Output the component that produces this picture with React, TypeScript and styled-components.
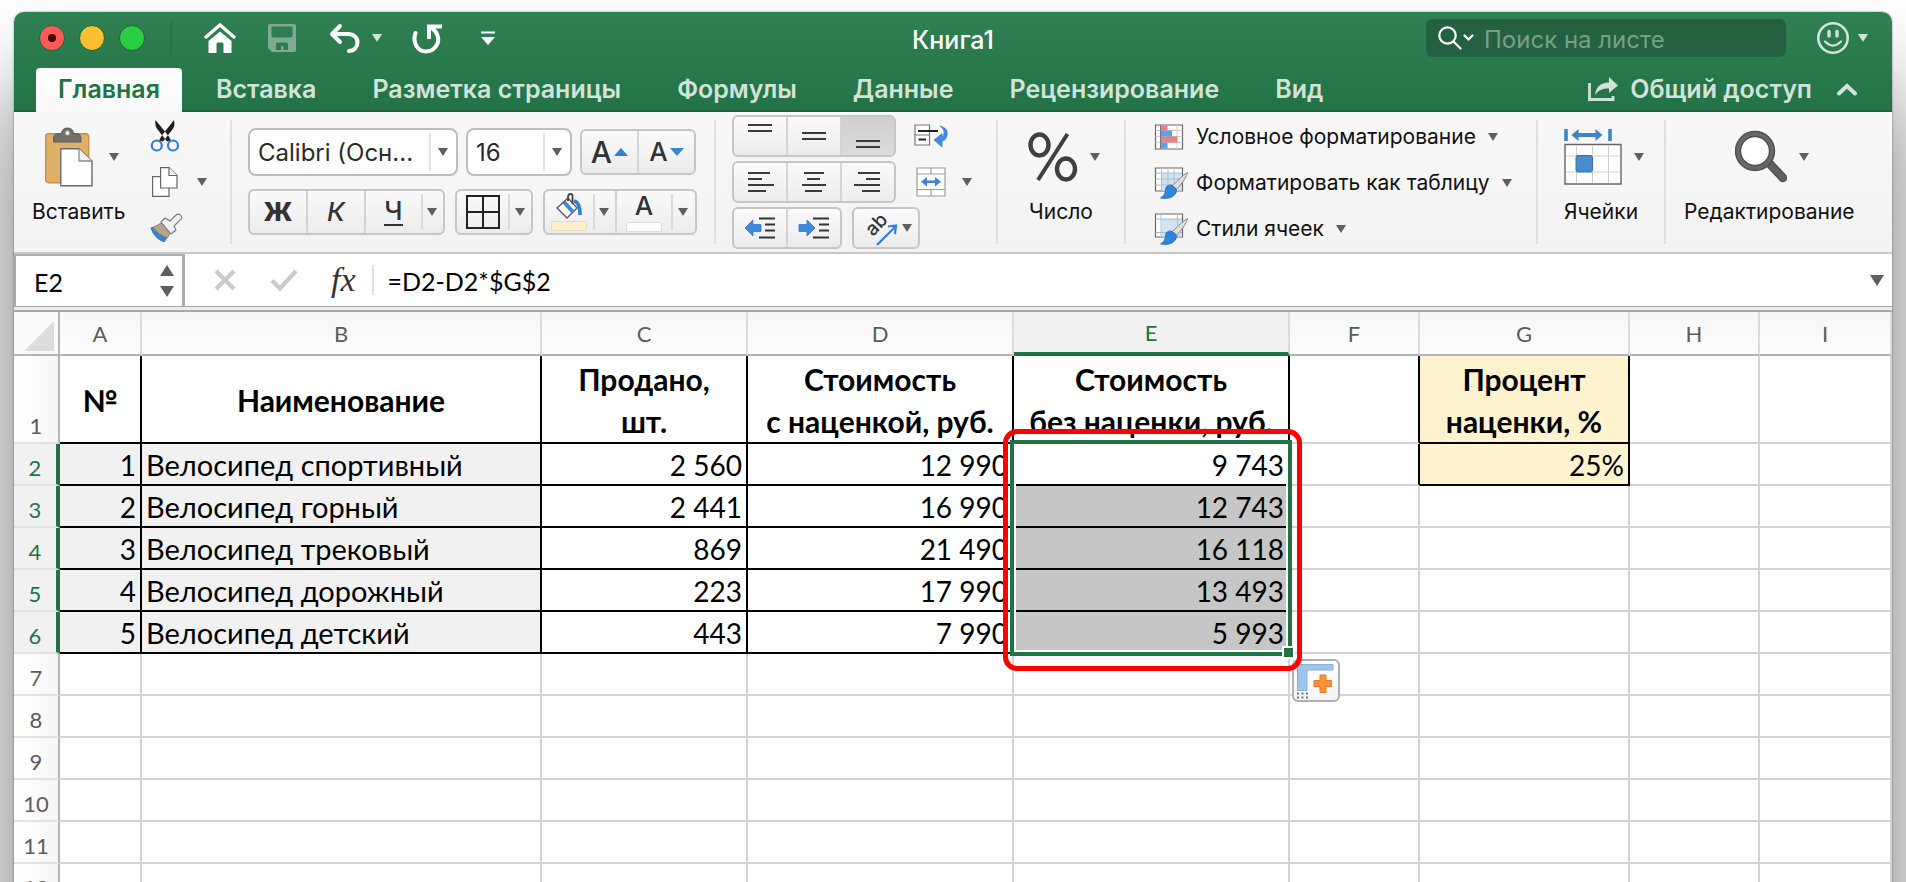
import React from 'react';
import styled, { createGlobalStyle, css } from 'styled-components';

const UI = '"Inter", "Liberation Sans", sans-serif';
const SHEET = '"Lato", "Open Sans", "Noto Sans", sans-serif';
const GREEN = '#217346';

const GlobalStyle = createGlobalStyle`
  *, *::before, *::after { box-sizing: border-box; }
  body { margin: 0; background: #fff; font-family: ${UI}; }
  button, input, select { font: inherit; color: inherit; margin: 0; }
`;

/* ---------- window ---------- */

const Desktop = styled.div`
  height: 100vh;
  overflow: hidden;
  padding: 12px 14px 0;
  background: #fff;
`;

const Window = styled.main`
  border-radius: 10px 10px 0 0;
  background: #fff;
  box-shadow: 0 0 2px rgba(0, 0, 0, 0.5), 0 75px 100px rgba(0, 0, 0, 0.55);
`;

const Header = styled.header`
  border-radius: 10px 10px 0 0;
  border-bottom: 2px solid #1e5f39;
  background: linear-gradient(#308054, #227345);
  color: #d3e3d9;
`;

const TitleBar = styled.div`
  display: grid;
  grid-template-columns: 1fr auto 1fr;
  align-items: center;
  height: 52px;
`;

const TitleLeft = styled.div`
  display: flex;
  align-items: center;
  padding-left: 25px;
`;

const Lights = styled.div`
  display: flex;
  gap: 14px;
`;

const Light = styled.button<{ $color: string; $dot?: boolean }>`
  display: grid;
  place-items: center;
  width: 26px;
  height: 26px;
  padding: 0;
  border: 1px solid #22603c;
  border-radius: 50%;
  background: ${(p) => p.$color};
  &::after {
    content: '';
    width: 8px;
    height: 8px;
    border-radius: 50%;
    background: ${(p) => (p.$dot ? '#4d0000' : 'transparent')};
  }
`;

const TitleRule = styled.span`
  width: 2px;
  height: 32px;
  margin: 0 32px 0 25px;
  background: #2a6d48;
`;

const QuickTools = styled.div`
  display: flex;
  align-items: center;
  gap: 30px;
`;

const PlainButton = styled.button<{ $gap?: number }>`
  display: flex;
  align-items: center;
  justify-content: center;
  gap: ${(p) => p.$gap ?? 12}px;
  padding: 0;
  border: 0;
  background: none;
  svg { display: block; flex: none; }
`;

const DocTitle = styled.h1`
  margin: 0;
  padding-top: 3px;
  font-size: 25px;
  font-weight: 500;
  line-height: 30px;
  color: #fff;
`;

const TitleRight = styled.div`
  display: flex;
  align-items: center;
  justify-content: flex-end;
  gap: 30px;
  padding-right: 24px;
`;

const Search = styled.label`
  display: flex;
  align-items: center;
  gap: 10px;
  width: 360px;
  height: 38px;
  padding: 0 12px;
  border-radius: 6px;
  background: #246140;
  svg { flex: none; }
`;

const SearchInput = styled.input`
  flex: 1;
  min-width: 0;
  padding: 2px 0 0;
  border: 0;
  outline: 0;
  background: none;
  font-size: 24px;
  color: #fff;
  &::placeholder { color: #76a087; opacity: 1; }
`;

const TabRow = styled.div`
  display: flex;
  justify-content: space-between;
  margin-top: 4px;
  padding: 0 34px 0 22px;
`;

const Tabs = styled.nav`
  display: flex;
  gap: 12px;
`;

const Tab = styled.button<{ $active?: boolean }>`
  height: 44px;
  margin-bottom: -2px;
  padding: 0 22px 2px;
  border: 0;
  border-radius: 4px 4px 0 0;
  background: ${(p) => (p.$active ? 'linear-gradient(#fff, #f8f8f8)' : 'none')};
  color: ${(p) => (p.$active ? GREEN : '#d3e3d9')};
  font-size: 25px;
  font-weight: 600;
  line-height: 30px;
  white-space: nowrap;
`;

const ShareArea = styled.div`
  display: flex;
  align-items: center;
  gap: 24px;
  font-size: 25px;
  font-weight: 600;
`;

/* ---------- ribbon ---------- */

const Ribbon = styled.section`
  display: flex;
  height: 142px;
  border-bottom: 2px solid #c8c8c8;
  background: linear-gradient(#f8f8f8, #f3f3f3);
  color: #111;
`;

const Group = styled.div<{ $width?: number; $pad?: number }>`
  display: flex;
  flex: ${(p) => (p.$width ? `0 0 ${p.$width}px` : '1 0 auto')};
  padding-left: ${(p) => p.$pad ?? 0}px;
`;

const Rule = styled.span`
  flex: none;
  width: 2px;
  margin: 8px 0;
  background: #e0e0e0;
`;

const Centered = styled(Group)`
  justify-content: center;
`;

const Stack = styled.div<{ $gap: number }>`
  display: flex;
  flex-direction: column;
  justify-content: center;
  gap: ${(p) => p.$gap}px;
`;

const Row = styled.div<{ $gap: number; $height?: number }>`
  display: flex;
  align-items: center;
  gap: ${(p) => p.$gap}px;
  height: ${(p) => p.$height ?? 46}px;
`;

const BigButton = styled.button`
  display: flex;
  flex-direction: column;
  align-items: center;
  align-self: flex-start;
  gap: 12px;
  padding: 15px 0 0;
  border: 0;
  background: none;
  font-size: 21px;
  line-height: 26px;
  white-space: nowrap;
`;

const BigIcon = styled.span<{ $gap?: number }>`
  display: flex;
  align-items: center;
  gap: ${(p) => p.$gap ?? 12}px;
  height: 60px;
  padding-left: 6px;
`;

const Segments = styled.div`
  display: flex;
  height: 100%;
  border: 2px solid #c6c6c6;
  border-radius: 6px;
  background: linear-gradient(#fafafa, #ececec);
`;

const Segment = styled.button<{ $width: number; $line?: boolean; $pressed?: boolean }>`
  display: flex;
  align-items: center;
  justify-content: center;
  gap: 2px;
  width: ${(p) => p.$width}px;
  padding: 0;
  border: 0;
  border-right: ${(p) => (p.$line ? '2px solid #d4d4d4' : '0')};
  background: ${(p) => (p.$pressed ? 'linear-gradient(#cfcfcf, #dcdcdc)' : 'none')};
  color: #333;
  svg { display: block; flex: none; }
  &:last-child { border-radius: 0 4px 4px 0; }
`;

const DropSegment = styled(Segment)`
  position: relative;
  &::before {
    content: '';
    position: absolute;
    left: 0;
    top: 3px;
    bottom: 3px;
    width: 2px;
    background: #dadada;
  }
`;

const Glyph = styled.span<{ $size?: number; $bold?: boolean; $italic?: boolean; $underline?: boolean }>`
  font-size: ${(p) => p.$size ?? 26}px;
  line-height: 28px;
  font-weight: ${(p) => (p.$bold ? 800 : 500)};
  font-style: ${(p) => (p.$italic ? 'italic' : 'normal')};
  ${(p) => p.$underline && css`border-bottom: 2px solid #333; line-height: 26px;`}
`;

const Swatched = styled.span<{ $color: string }>`
  display: flex;
  flex-direction: column;
  align-items: center;
  gap: 2px;
  &::after {
    content: '';
    width: 36px;
    height: 10px;
    border: 1px solid #e0dccf;
    border-radius: 2px;
    background: ${(p) => p.$color};
  }
`;

const Combo = styled.span<{ $width: number }>`
  position: relative;
  display: flex;
  width: ${(p) => p.$width}px;
  height: 48px;
  svg {
    position: absolute;
    right: 10px;
    top: 20px;
    pointer-events: none;
  }
  &::after {
    content: '';
    position: absolute;
    right: 27px;
    top: 5px;
    bottom: 5px;
    width: 2px;
    background: #e4e4e4;
    pointer-events: none;
  }
`;

const ComboSelect = styled.select`
  appearance: none;
  width: 100%;
  padding: 0 30px 0 8px;
  border: 2px solid #bdbdbd;
  border-radius: 8px;
  background: #fff;
  font-size: 24px;
  color: #2a2a2a;
`;

const StyleButton = styled.button`
  display: flex;
  align-items: center;
  height: 42px;
  padding: 2px 0 0;
  border: 0;
  background: none;
  font-size: 21px;
  line-height: 26px;
  white-space: nowrap;
  svg { display: block; flex: none; }
  > span { margin: 0 12px 0 6px; }
`;

/* ---------- formula bar ---------- */

const FormulaBar = styled.section`
  display: flex;
  align-items: stretch;
  height: 53px;
  padding-right: 8px;
  border-bottom: 1px solid #a8a8a8;
  background: #fff;
  color: #000;
  font-family: ${SHEET};
  font-size: 25px;
`;

const NameBox = styled.div`
  display: flex;
  width: 171px;
  border: 2px solid #ababab;
  border-width: 2px 3px 0 2px;
  padding-right: 8px;
`;

const BareInput = styled.input`
  flex: 1;
  min-width: 0;
  padding: 2px 0 0;
  border: 0;
  outline: 0;
  background: none;
`;

const NameInput = styled(BareInput)`
  padding-left: 18px;
`;

const Stepper = styled.div`
  display: flex;
  flex-direction: column;
  justify-content: center;
  gap: 10px;
`;

const FormulaTools = styled.div`
  display: flex;
  align-items: center;
  gap: 33px;
  padding: 0 16px 0 28px;
`;

const FormulaRule = styled.span`
  width: 2px;
  margin: 11px 14px 11px 0;
  background: #dedede;
`;

const Splitter = styled.div`
  height: 5px;
  border-bottom: 2px solid #a8a8a8;
  background: #ededed;
`;

/* ---------- sheet ---------- */

const Sheet = styled.table`
  width: 100%;
  table-layout: fixed;
  border-collapse: separate;
  border-spacing: 0;
  font-family: ${SHEET};
  color: #000;
`;

const ColHead = styled.th<{ $selected?: boolean }>`
  height: 44px;
  padding: 2px 0 0;
  border-right: 2px solid #dcdcdc;
  border-bottom: ${(p) => (p.$selected ? `4px solid ${GREEN}` : '2px solid #b4b4b4')};
  background: ${(p) => (p.$selected ? '#f1f1f1' : 'linear-gradient(#f7f7f7, #fcfcfc)')};
  color: ${(p) => (p.$selected ? GREEN : '#5c5c5c')};
  font-size: 22px;
  font-weight: 400;
  line-height: 38px;
`;

const Corner = styled.th`
  padding: 9px 4px 0 10px;
  border-right: 2px solid #b4b4b4;
  border-bottom: 2px solid #b4b4b4;
  background: #fafafa;
  vertical-align: top;
  svg { display: block; }
`;

const RowHead = styled.th<{ $selected?: boolean }>`
  padding: 0 0 3px;
  border-right: ${(p) => (p.$selected ? `4px solid ${GREEN}` : '2px solid #b4b4b4')};
  border-bottom: 2px solid #e2e2e2;
  background: ${(p) => (p.$selected ? '#f1f1f1' : 'linear-gradient(90deg, #fff, #f7f7f7)')};
  color: ${(p) => (p.$selected ? GREEN : '#5c5c5c')};
  font-size: 22px;
  font-weight: 400;
  line-height: 26px;
  vertical-align: bottom;
`;

type CellProps = {
  $right?: boolean;
  $bottom?: boolean;
  $fill?: string;
  $align?: string;
};

const Cell = styled.td<CellProps>`
  position: relative;
  padding: 2px 4px 0;
  border-right: 2px solid ${(p) => (p.$right ? '#000' : '#d4d4d4')};
  border-bottom: 2px solid ${(p) => (p.$bottom ? '#000' : '#d4d4d4')};
  background: ${(p) => p.$fill ?? '#fff'};
  text-align: ${(p) => p.$align ?? 'left'};
  font-size: ${(p) => (p.$align === 'right' ? 28 : 29)}px;
  line-height: 38px;
  white-space: pre;
`;

const HeadingCell = styled(Cell)`
  padding: 2px 0 0;
  font-size: 30px;
  font-weight: 700;
  line-height: 42px;
`;

const TableRow = styled.tr<{ $height: number }>`
  height: ${(p) => p.$height}px;
`;

const Selection = styled.div`
  position: absolute;
  z-index: 2;
  left: -4px;
  top: -4px;
  width: 282px;
  height: 216px;
  border: 4px solid ${GREEN};
  box-shadow: inset 0 0 0 2px #fff;
  pointer-events: none;
`;

const FillHandle = styled.span`
  position: absolute;
  right: -7px;
  bottom: -7px;
  width: 13px;
  height: 13px;
  border: 2px solid #fff;
  background: ${GREEN};
`;

const Highlight = styled.div`
  position: absolute;
  left: -11px;
  top: -15px;
  width: 299px;
  height: 242px;
  border: 5px solid #fe0000;
  border-radius: 14px;
`;

const FillOptions = styled.button`
  position: absolute;
  z-index: 1;
  left: 278px;
  top: 215px;
  width: 48px;
  height: 43px;
  padding: 0;
  border: 2px solid #b0b0b0;
  border-radius: 6px;
  background: linear-gradient(#fff, #f4f4f4);
  svg { display: block; margin: 2px 0 0 3px; }
`;

/* ---------- icons ---------- */

const Down = ({ w = 10, h = 8, color = '#5f5f5f' }: { w?: number; h?: number; color?: string }) => (
  <svg width={w} height={h} viewBox="0 0 10 8" preserveAspectRatio="none" aria-hidden="true">
    <path d="M0 0H10L5 8Z" fill={color} />
  </svg>
);

const Up = ({ w = 14, h = 11, color = '#5f5f5f' }: { w?: number; h?: number; color?: string }) => (
  <svg width={w} height={h} viewBox="0 0 10 8" preserveAspectRatio="none" aria-hidden="true">
    <path d="M0 8H10L5 0Z" fill={color} />
  </svg>
);

const Home = () => (
  <svg width="32" height="32" viewBox="0 0 32 32">
    <path d="M2 15L16 3L30 15" fill="none" stroke="#fff" strokeWidth="3.4" strokeLinecap="round" />
    <path d="M16 9.5L27.500 19V31H19.500V22Q19.500 20.500 18 20.500H14Q12.500 20.500 12.500 22V31H4.500V19Z" fill="#fff" />
  </svg>
);

const Save = () => (
  <svg width="32" height="30" viewBox="0 0 32 30">
    <path fillRule="evenodd" fill="#80ab92" d="M4 1H28Q30 1 30 3V27Q30 29 28 29H6L2 25V3Q2 1 4 1ZM5.500 3.500V12Q5.500 14.500 8 14.500H24Q26.500 14.500 26.500 12V3.500ZM10 27H15V23H17.500V27H22V21Q22 19.500 20.500 19.500H11.500Q10 19.500 10 21Z" />
  </svg>
);

const Undo = () => (
  <svg width="32" height="32" viewBox="0 0 32 32">
    <path d="M12 4L4 12L12 20M5 12H20C26 12 29.500 16 29.500 20.500C29.500 25 26 29 21 29" fill="none" stroke="#fff" strokeWidth="4" strokeLinecap="round" strokeLinejoin="round" />
  </svg>
);

const Redo = () => (
  <svg width="30" height="32" viewBox="2 0 30 32">
    <path d="M5.500 11C2 21 8 29.500 16 29.500C23 29.500 29.500 23 28 15C27 10.500 24 7.500 20.500 5" fill="none" stroke="#fff" strokeWidth="4" strokeLinecap="round" />
    <path d="M19 17V4.500H32" fill="none" stroke="#fff" strokeWidth="4" />
  </svg>
);

const Customize = () => (
  <svg width="32" height="14" viewBox="0 0 32 14">
    <path d="M9 1.500H23" stroke="#fff" strokeWidth="2" />
    <path d="M9 6H23L16 14Z" fill="#fff" />
  </svg>
);

const SearchIcon = () => (
  <svg width="36" height="26" viewBox="0 0 36 26" fill="none" stroke="#fff" strokeWidth="2.200" strokeLinecap="round">
    <circle cx="9.500" cy="10.500" r="8.200" />
    <path d="M15.500 16.500L22.500 23.500M26.500 10.500L30.500 14.500L34.500 10.500" />
  </svg>
);

const Smiley = () => (
  <svg width="34" height="34" viewBox="0 0 34 34" fill="none" stroke="#d3e3d9" strokeWidth="2.600" strokeLinecap="round">
    <circle cx="17" cy="17" r="14.700" />
    <path d="M13 10.500V15M21 10.500V15" strokeWidth="3.400" />
    <path d="M9 20.500Q17 28.500 25 20.500" strokeWidth="2.200" />
  </svg>
);

const Share = () => (
  <svg width="30" height="26" viewBox="0 0 30 26">
    <path d="M1.500 7V23.500H25V20" fill="none" stroke="#d3e3d9" strokeWidth="2.800" />
    <path d="M7 19C8 11 12 7 21 6.500V1L30 9.500L21 17V12.500C14 12.500 10.500 14 7 19Z" fill="#d3e3d9" />
  </svg>
);

const ChevronUp = () => (
  <svg width="22" height="14" viewBox="0 0 22 14">
    <path d="M3 11.500L11 4L19 11.500" fill="none" stroke="#d3e3d9" strokeWidth="4" strokeLinecap="round" />
  </svg>
);

const Clipboard = () => (
  <svg width="48" height="60" viewBox="0 0 48 60">
    <rect x="0.700" y="6.700" width="43" height="49" rx="3" fill="#e0b067" stroke="#c98f4b" strokeWidth="1.400" />
    <path d="M8.500 15V11Q8.500 7 13 6.500H16.500Q17 1 22.500 1T28.500 6.500H32Q36 7 36 11V15Z" fill="#6f6f6f" stroke="#5a5a5a" />
    <circle cx="22.500" cy="6" r="2.300" fill="#fff" stroke="#c98f4b" />
    <path d="M15.800 21.700H34L47 34V58.700H15.800Z" fill="#fff" stroke="#6a6a6a" strokeWidth="1.400" />
    <path d="M34 21.700V34H47" fill="#f2f2f2" stroke="#8a8a8a" strokeWidth="1.300" />
  </svg>
);

const Scissors = () => (
  <svg width="32" height="34" viewBox="0 0 32 34">
    <path d="M6.500 1Q5.500 7 9 11L18 22.500L22 21.500L19.500 17ZM25 1Q26.500 7 23 11L14 22.500L10 21.500L12.500 17Z" fill="#1d1d1d" />
    <circle cx="7.800" cy="26.500" r="5" fill="none" stroke="#2d7dd2" strokeWidth="2.200" />
    <circle cx="24" cy="26.500" r="5" fill="none" stroke="#2d7dd2" strokeWidth="2.200" />
  </svg>
);

const Copy = () => (
  <svg width="32" height="34" viewBox="0 0 32 34" fill="#fff" stroke="#666" strokeWidth="1.200">
    <path d="M3.600 11.600H20V31.400H3.600Z" />
    <path d="M11.600 2.600H20L28 10.500V23H11.600Z" />
    <path d="M20 2.600V10.500H28" fill="#f2f2f2" />
  </svg>
);

const Brush = () => (
  <svg width="34" height="30" viewBox="0 0 34 30">
    <path d="M2 15L11 12L20 22L15 29Q5 25 2 15Z" fill="#3b82cf" stroke="#2c66a8" strokeWidth="0.800" />
    <path d="M4 14.500L13 9.500L22 19L18 25Q10 22 4 14.500Z" fill="#b7a48c" stroke="#8c7a62" strokeWidth="0.800" />
    <path d="M12 9L16 5L21 8L27 2Q30 0 32 2.500T31 7L25 13L27 17L22 21Z" fill="#f1f1f1" stroke="#777" strokeWidth="1.100" />
  </svg>
);

const Borders = () => (
  <svg width="34" height="34" viewBox="0 0 34 34" fill="none" stroke="#222" strokeWidth="2">
    <path d="M1 1H33V33H1ZM17 1V33M1 17H33" />
  </svg>
);

const Bucket = () => (
  <svg width="28" height="26" viewBox="0 0 28 26">
    <path d="M13 5L22 15L12 25L2 15Z" fill="#fff" stroke="#555" strokeWidth="1.300" />
    <path d="M9 9L18 19" stroke="#3f86d8" strokeWidth="4" />
    <path d="M13 8V4Q13 1 15.500 1T17.500 4V11" fill="none" stroke="#444" strokeWidth="1.800" />
    <path d="M19 8Q25 9 25 22" fill="none" stroke="#2f7fd6" strokeWidth="3.600" />
  </svg>
);

const Lines = ({ rows }: { rows: [number, number, number][] }) => (
  <svg width="32" height="36" viewBox="0 0 32 36">
    {rows.map(([x, y, w]) => (
      <rect key={y} x={x} y={y} width={w} height="2" fill="#3a3a3a" />
    ))}
  </svg>
);

const Indent = ({ out }: { out?: boolean }) => (
  <svg width="32" height="24" viewBox="0 0 32 24">
    <path d="M15 2.500H31M21 8.500H31M21 14.500H31M15 21.500H31" stroke="#333" strokeWidth="2" />
    <path
      d={out ? 'M1 12L9 4V8.500H17V15.500H9V20Z' : 'M17 12L9 4V8.500H1V15.500H9V20Z'}
      fill="#3f8ae0"
      stroke="#2f78cc"
      strokeWidth="0.800"
    />
  </svg>
);

const Orientation = () => (
  <svg width="40" height="38" viewBox="0 0 40 38">
    <text x="0" y="0" transform="translate(13 28) rotate(-46)" fontFamily="Inter" fontSize="19" fontWeight="500" fill="#333">ab</text>
    <path d="M17 36L35 18M28 17.500L36 16.500L35 25" fill="none" stroke="#2f7fd6" strokeWidth="2.200" />
  </svg>
);

const Wrap = () => (
  <svg width="36" height="26" viewBox="0 0 36 26">
    <path d="M1 2H15.500V22H1ZM1 12H15.500" fill="#fff" stroke="#777" strokeWidth="1.200" />
    <path d="M4 8H24M4.500 16.500H12" stroke="#222" strokeWidth="2" />
    <path d="M26 3Q35 5 33 13Q32 17 28 18.500V24L20 17L28 10.500V14Q31 11 30 8Q29 5 26 3Z" fill="#3f8ae0" stroke="#2f78cc" strokeWidth="0.600" />
  </svg>
);

const Merge = () => (
  <svg width="30" height="30" viewBox="0 0 30 30">
    <path d="M1 1H29V29H1ZM1 7H29M1 22.500H29M15 1V7M15 22.500V29" fill="#fff" stroke="#9c9c9c" strokeWidth="1.200" />
    <path d="M5 14.800L11 10V13.500H19V10L25 14.800L19 19.500V16H11V19.500Z" fill="#3683d8" />
  </svg>
);

const Percent = () => (
  <svg width="50" height="50" viewBox="0 0 50 50" fill="none" stroke="#404040">
    <ellipse cx="11.500" cy="13" rx="9" ry="10.500" strokeWidth="4.400" />
    <ellipse cx="38" cy="37" rx="9" ry="10.500" strokeWidth="4.400" />
    <path d="M39.500 2L10 48" strokeWidth="4" />
  </svg>
);

const CondFormat = () => (
  <svg width="36" height="34" viewBox="0 0 36 34">
    <path d="M1.500 5H28.500V29H1.500Z" fill="#fff" stroke="#666" strokeWidth="1.200" />
    <path d="M1.500 10.500H28.500M1.500 16.500H28.500M1.500 22.500H28.500M23 5V29" stroke="#ccc" strokeWidth="1" />
    <path d="M7 5.500H13.500V10.500H7ZM7 16.500H23.500V22.500H7Z" fill="#ec7f80" />
    <path d="M7 10.500H18V16.500H7ZM7 22.500H13.500V28.500H7Z" fill="#5fa2e6" />
    <path d="M6.500 5V29" stroke="#777" />
  </svg>
);

const PaintedTable = ({ grid }: { grid?: boolean }) => (
  <svg width="36" height="34" viewBox="0 0 36 34">
    <path d="M1.500 2H28.500V25H1.500Z" fill="#fff" stroke="#666" strokeWidth="1.200" />
    <path d="M7.500 7H28V24.500H7.500Z" fill="#cfe3f5" />
    {grid ? (
      <path d="M1.500 7H28M1.500 13H28M1.500 19H28M7.500 2V25M14 2V25M20 2V25" stroke="#aebfce" />
    ) : (
      <path d="M1.500 7H28M1.500 20.500H28M7 2V25M23.500 2V25" stroke="#aebfce" />
    )}
    <path d="M33.500 6.500Q30 8 18 20L22 24Q33 12 33.500 6.500Z" fill="#ddd" stroke="#888" strokeWidth="1" />
    <path d="M17 19Q11 19 11.500 25Q11 30 6.500 32Q18 34 22 27Q23 24 21.500 22Z" fill="#2f86df" stroke="#1d63ad" strokeWidth="0.800" />
  </svg>
);

const Cells = () => (
  <svg width="58" height="58" viewBox="0 0 58 58">
    <path d="M1 16.500H57V56H1Z" fill="#fff" stroke="#666" strokeWidth="1.400" />
    <path d="M2 28H56M2 44H56M12.500 17V55M28.500 17V55M44.500 17V55" stroke="#cfcfcf" />
    <rect x="12" y="27.500" width="16.500" height="16.500" rx="2" fill="#4a8bcb" stroke="#2f72b5" />
    <path d="M2 1V13M46 1V13" stroke="#3f84c6" strokeWidth="3.600" />
    <path d="M7.500 7L14.500 1V5H31.500V1L38.500 7L31.500 13V9H14.500V13Z" fill="#3f84c6" />
  </svg>
);

const Magnifier = () => (
  <svg width="52" height="54" viewBox="0 0 52 54">
    <path d="M35 34L48 48" stroke="#4a4a4a" strokeWidth="8.500" strokeLinecap="round" />
    <path d="M36 35L48 48" stroke="#616161" strokeWidth="6" strokeLinecap="round" />
    <circle cx="20" cy="21" r="17" fill="#fff" stroke="#4f4f4f" strokeWidth="6.400" />
    <circle cx="20" cy="21" r="17" fill="none" stroke="#686868" strokeWidth="3.600" />
  </svg>
);

const Cancel = () => (
  <svg width="24" height="24" viewBox="0 0 24 24">
    <path d="M3 3L21 21M21 3L3 21" stroke="#c9c9c9" strokeWidth="4.200" />
  </svg>
);

const Accept = () => (
  <svg width="28" height="24" viewBox="0 0 28 24">
    <path d="M2 12.500L10 20.500L26 3" fill="none" stroke="#c9c9c9" strokeWidth="4.200" />
  </svg>
);

const FxLabel = styled.span`
  font-family: "Liberation Serif", serif;
  font-size: 34px;
  font-style: italic;
  line-height: 36px;
  color: #333;
`;

const CornerMark = () => (
  <svg width="30" height="30" viewBox="0 0 30 30">
    <path d="M30 0V30H0Z" fill="#dcdcdc" />
  </svg>
);

const AutoFill = () => (
  <svg width="38" height="36" viewBox="0 0 38 36">
    <path d="M0.500 0.500H36V6H10V26.500H0.500Z" fill="#9fc5ee" stroke="#86b1df" />
    <path d="M23 11H29V16.500H34.500V22.500H29V28.500H23V22.500H17V16.500H23Z" fill="#fb923a" stroke="#e57a1f" />
    <path d="M0 29.500H2M4.500 29.500H6.500M9 29.500H11M0 33.500H2M4.500 33.500H6.500M9 33.500H11" stroke="#777" strokeWidth="2" />
  </svg>
);

/* ---------- data ---------- */

const tabs = ['Главная', 'Вставка', 'Разметка страницы', 'Формулы', 'Данные', 'Рецензирование', 'Вид'];

const columns: [string, number | undefined][] = [
  ['A', 82], ['B', 400], ['C', 206], ['D', 266], ['E', 276], ['F', 130], ['G', 210], ['H', 130], ['I', undefined],
];

const headings = [
  '№', 'Наименование', 'Продано,\nшт.', 'Стоимость\nс наценкой, руб.', 'Стоимость\nбез наценки, руб.',
  '', 'Процент\nнаценки, %', '', '',
];

const goods = [
  ['1', 'Велосипед спортивный', '2 560', '12 990', '9 743'],
  ['2', 'Велосипед горный', '2 441', '16 990', '12 743'],
  ['3', 'Велосипед трековый', '869', '21 490', '16 118'],
  ['4', 'Велосипед дорожный', '223', '17 990', '13 493'],
  ['5', 'Велосипед детский', '443', '7 990', '5 993'],
];

const emptyRows = [7, 8, 9, 10, 11, 12, 13];
const CREAM = '#fff2cf';

const fillFor = (col: number, row: number) => {
  if (col < 2) return '#f1f1f1';
  if (col === 4 && row > 0) return '#c6c6c6';
  if (col === 6 && row === 0) return CREAM;
  return undefined;
};

export default function App() {
  return (
    <>
      <GlobalStyle />
      <Desktop>
        <Window>
          <Header>
            <TitleBar>
              <TitleLeft>
                <Lights>
                  <Light $color="#fc5b57" $dot aria-label="Закрыть" />
                  <Light $color="#fdbe30" aria-label="Свернуть" />
                  <Light $color="#28cd41" aria-label="Развернуть" />
                </Lights>
                <TitleRule />
                <QuickTools>
                  <PlainButton aria-label="Домой"><Home /></PlainButton>
                  <PlainButton aria-label="Сохранить"><Save /></PlainButton>
                  <PlainButton aria-label="Отменить"><Undo /><Down color="#d3e3d9" /></PlainButton>
                  <PlainButton aria-label="Повторить"><Redo /></PlainButton>
                  <PlainButton aria-label="Настроить панель"><Customize /></PlainButton>
                </QuickTools>
              </TitleLeft>
              <DocTitle>Книга1</DocTitle>
              <TitleRight>
                <Search>
                  <SearchIcon />
                  <SearchInput placeholder="Поиск на листе" aria-label="Поиск на листе" />
                </Search>
                <PlainButton $gap={8} aria-label="Отзыв"><Smiley /><Down color="#d3e3d9" /></PlainButton>
              </TitleRight>
            </TitleBar>
            <TabRow>
              <Tabs>
                {tabs.map((t, i) => <Tab key={t} $active={i === 0}>{t}</Tab>)}
              </Tabs>
              <ShareArea>
                <PlainButton><Share />Общий доступ</PlainButton>
                <PlainButton aria-label="Свернуть ленту"><ChevronUp /></PlainButton>
              </ShareArea>
            </TabRow>
          </Header>

          <Ribbon>
            <Group $width={216} $pad={18}>
              <Row $gap={24} $height={140}>
                <BigButton>
                  <BigIcon $gap={16}><Clipboard /><Down /></BigIcon>
                  Вставить
                </BigButton>
                <Stack $gap={4}>
                  <Row $gap={0} $height={42}><PlainButton aria-label="Вырезать"><Scissors /></PlainButton></Row>
                  <Row $gap={0} $height={42}><PlainButton $gap={16} aria-label="Копировать"><Copy /><Down /></PlainButton></Row>
                  <Row $gap={0} $height={42}><PlainButton aria-label="Формат по образцу"><Brush /></PlainButton></Row>
                </Stack>
              </Row>
            </Group>
            <Rule />
            <Group $width={482} $pad={16}>
              <Stack $gap={14}>
                <Row $gap={8}>
                  <Combo $width={210}>
                    <ComboSelect aria-label="Шрифт"><option>Calibri (Осн...</option></ComboSelect>
                    <Down />
                  </Combo>
                  <Combo $width={106}>
                    <ComboSelect aria-label="Размер шрифта"><option>16</option></ComboSelect>
                    <Down />
                  </Combo>
                  <Segments>
                    <Segment $width={57} $line aria-label="Увеличить шрифт"><Glyph $size={30}>A</Glyph><Up w={14} h={8} color="#2f7fd6" /></Segment>
                    <Segment $width={55} aria-label="Уменьшить шрифт"><Glyph>A</Glyph><Down w={14} h={8} color="#3a86cf" /></Segment>
                  </Segments>
                </Row>
                <Row $gap={10}>
                  <Segments>
                    <Segment $width={58} $line><Glyph $bold>Ж</Glyph></Segment>
                    <Segment $width={58} $line><Glyph $italic>К</Glyph></Segment>
                    <Segment $width={55}><Glyph $underline>Ч</Glyph></Segment>
                    <DropSegment $width={22} aria-label="Варианты подчёркивания"><Down /></DropSegment>
                  </Segments>
                  <Segments>
                    <Segment $width={51} aria-label="Границы"><Borders /></Segment>
                    <DropSegment $width={23} aria-label="Варианты границ"><Down /></DropSegment>
                  </Segments>
                  <Segments>
                    <Segment $width={48} aria-label="Цвет заливки"><Swatched $color="#fdefc8"><Bucket /></Swatched></Segment>
                    <DropSegment $width={24} $line aria-label="Варианты заливки"><Down /></DropSegment>
                    <Segment $width={54} aria-label="Цвет текста"><Swatched $color="#fff"><Glyph>A</Glyph></Swatched></Segment>
                    <DropSegment $width={24} aria-label="Варианты цвета"><Down /></DropSegment>
                  </Segments>
                </Row>
              </Stack>
            </Group>
            <Rule />
            <Group $width={280} $pad={16}>
              <Stack $gap={4}>
                <Row $gap={18} $height={42}>
                  <Segments>
                    <Segment $width={54} $line aria-label="По верхнему краю"><Lines rows={[[4, 6, 24], [4, 12, 24]]} /></Segment>
                    <Segment $width={54} $line aria-label="Посередине"><Lines rows={[[4, 14, 24], [4, 20, 24]]} /></Segment>
                    <Segment $width={52} $pressed aria-label="По нижнему краю"><Lines rows={[[4, 22, 24], [4, 28, 24]]} /></Segment>
                  </Segments>
                  <PlainButton aria-label="Перенос текста"><Wrap /></PlainButton>
                </Row>
                <Row $gap={20} $height={42}>
                  <Segments>
                    <Segment $width={54} $line aria-label="По левому краю"><Lines rows={[[4, 8, 22], [4, 14, 14], [4, 20, 26], [4, 26, 18]]} /></Segment>
                    <Segment $width={54} $line aria-label="По центру"><Lines rows={[[6, 8, 20], [9, 14, 13], [4, 20, 24], [7, 26, 17]]} /></Segment>
                    <Segment $width={52} aria-label="По правому краю"><Lines rows={[[6, 8, 22], [14, 14, 14], [2, 20, 26], [10, 26, 18]]} /></Segment>
                  </Segments>
                  <PlainButton $gap={16} aria-label="Объединить ячейки"><Merge /><Down /></PlainButton>
                </Row>
                <Row $gap={10} $height={42}>
                  <Segments>
                    <Segment $width={54} $line aria-label="Уменьшить отступ"><Indent out /></Segment>
                    <Segment $width={52} aria-label="Увеличить отступ"><Indent /></Segment>
                  </Segments>
                  <Segments>
                    <Segment $width={64} aria-label="Ориентация"><Orientation /><Down /></Segment>
                  </Segments>
                </Row>
              </Stack>
            </Group>
            <Rule />
            <Centered $width={126}>
              <BigButton><BigIcon><Percent /><Down /></BigIcon>Число</BigButton>
            </Centered>
            <Rule />
            <Group $width={410} $pad={28}>
              <Stack $gap={4}>
                <StyleButton><CondFormat /><span>Условное форматирование</span><Down /></StyleButton>
                <StyleButton><PaintedTable grid /><span>Форматировать как таблицу</span><Down /></StyleButton>
                <StyleButton><PaintedTable /><span>Стили ячеек</span><Down /></StyleButton>
              </Stack>
            </Group>
            <Rule />
            <Centered $width={126}>
              <BigButton><BigIcon><Cells /><Down /></BigIcon>Ячейки</BigButton>
            </Centered>
            <Rule />
            <Group $pad={18}>
              <BigButton><BigIcon><Magnifier /><Down /></BigIcon>Редактирование</BigButton>
            </Group>
          </Ribbon>

          <FormulaBar>
            <NameBox>
              <NameInput aria-label="Имя ячейки" defaultValue="E2" />
              <Stepper>
                <PlainButton aria-label="Предыдущее имя"><Up /></PlainButton>
                <PlainButton aria-label="Следующее имя"><Down w={14} h={11} /></PlainButton>
              </Stepper>
            </NameBox>
            <FormulaTools>
              <PlainButton aria-label="Отмена"><Cancel /></PlainButton>
              <PlainButton aria-label="Ввод"><Accept /></PlainButton>
              <PlainButton aria-label="Вставить функцию"><FxLabel>fx</FxLabel></PlainButton>
            </FormulaTools>
            <FormulaRule />
            <BareInput aria-label="Формула" defaultValue="=D2-D2*$G$2" />
            <PlainButton aria-label="Развернуть строку формул"><Down w={14} h={11} /></PlainButton>
          </FormulaBar>
          <Splitter />

          <Sheet>
            <colgroup>
              <col width={46} />
              {columns.map(([name, w]) => <col key={name} width={w} />)}
            </colgroup>
            <thead>
              <tr>
                <Corner aria-label="Выделить всё"><CornerMark /></Corner>
                {columns.map(([name]) => <ColHead key={name} scope="col" $selected={name === 'E'}>{name}</ColHead>)}
              </tr>
            </thead>
            <tbody>
              <TableRow $height={88}>
                <RowHead scope="row">1</RowHead>
                {headings.map((h, c) => (
                  <HeadingCell
                    key={c}
                    $align="center"
                    $right={c < 7}
                    $bottom={c < 5 || c === 6}
                    $fill={c === 6 ? CREAM : undefined}
                  >
                    {h}
                  </HeadingCell>
                ))}
              </TableRow>
              {goods.map((g, r) => (
                <TableRow key={r} $height={42}>
                  <RowHead scope="row" $selected>{r + 2}</RowHead>
                  {columns.map(([name], c) => (
                    <Cell
                      key={name}
                      $align={c === 1 ? 'left' : 'right'}
                      $right={c < 5 || (r === 0 && (c === 5 || c === 6))}
                      $bottom={c < 5 || (r === 0 && c === 6)}
                      $fill={fillFor(c, r)}
                    >
                      {c < 5 ? g[c] : c === 6 && r === 0 ? '25%' : ''}
                      {c === 4 && r === 0 && (
                        <>
                          <Selection>
                            <Highlight />
                            <FillHandle />
                          </Selection>
                          <FillOptions aria-label="Параметры автозаполнения"><AutoFill /></FillOptions>
                        </>
                      )}
                    </Cell>
                  ))}
                </TableRow>
              ))}
              {emptyRows.map((n) => (
                <TableRow key={n} $height={42}>
                  <RowHead scope="row">{n}</RowHead>
                  {columns.map(([name]) => <Cell key={name} />)}
                </TableRow>
              ))}
            </tbody>
          </Sheet>
        </Window>
      </Desktop>
    </>
  );
}
